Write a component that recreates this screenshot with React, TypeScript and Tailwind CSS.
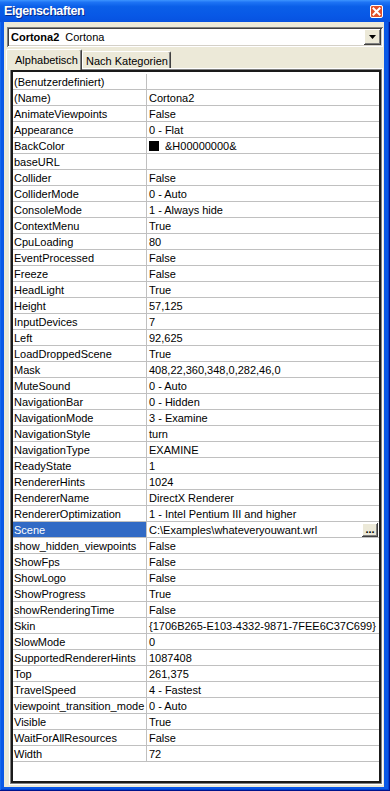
import React from "react";

const rows: [string, string][] = [
  ["(Benutzerdefiniert)", ""],
  ["(Name)", "Cortona2"],
  ["AnimateViewpoints", "False"],
  ["Appearance", "0 - Flat"],
  ["BackColor", "&H00000000&"],
  ["baseURL", ""],
  ["Collider", "False"],
  ["ColliderMode", "0 - Auto"],
  ["ConsoleMode", "1 - Always hide"],
  ["ContextMenu", "True"],
  ["CpuLoading", "80"],
  ["EventProcessed", "False"],
  ["Freeze", "False"],
  ["HeadLight", "True"],
  ["Height", "57,125"],
  ["InputDevices", "7"],
  ["Left", "92,625"],
  ["LoadDroppedScene", "True"],
  ["Mask", "408,22,360,348,0,282,46,0"],
  ["MuteSound", "0 - Auto"],
  ["NavigationBar", "0 - Hidden"],
  ["NavigationMode", "3 - Examine"],
  ["NavigationStyle", "turn"],
  ["NavigationType", "EXAMINE"],
  ["ReadyState", "1"],
  ["RendererHints", "1024"],
  ["RendererName", "DirectX Renderer"],
  ["RendererOptimization", "1 - Intel Pentium III and higher"],
  ["Scene", "C:\\Examples\\whateveryouwant.wrl"],
  ["show_hidden_viewpoints", "False"],
  ["ShowFps", "False"],
  ["ShowLogo", "False"],
  ["ShowProgress", "True"],
  ["showRenderingTime", "False"],
  ["Skin", "{1706B265-E103-4332-9871-7FEE6C37C699}"],
  ["SlowMode", "0"],
  ["SupportedRendererHints", "1087408"],
  ["Top", "261,375"],
  ["TravelSpeed", "4 - Fastest"],
  ["viewpoint_transition_mode", "0 - Auto"],
  ["Visible", "True"],
  ["WaitForAllResources", "False"],
  ["Width", "72"],
];

function Row({ name, value }: { name: string; value: string }) {
  const selected = name === "Scene";
  return (
    <div className="flex h-4 shrink-0 border-b border-[#C0C0C0]">
      <div
        className={
          selected
            ? "w-[134px] shrink-0 border-r border-[#C0C0C0] bg-[#316AC5] text-white pl-[1px] leading-[17px] whitespace-nowrap overflow-hidden"
            : "w-[134px] shrink-0 border-r border-[#C0C0C0] pl-[1px] leading-[17px] whitespace-nowrap overflow-hidden"
        }
      >
        {name}
      </div>
      <div className="flex-1 flex items-center pl-[2px] whitespace-nowrap overflow-hidden">
        {name === "BackColor" && (
          <span className="w-[10px] h-[10px] bg-black mr-[6px] mt-[1px] shrink-0" />
        )}
        <span className="flex-1 leading-[17px] h-[15px]">{value}</span>
        {selected && (
          <span className="w-[16px] h-[14px] mr-[1px] bg-[#ECE9D8] flex items-end justify-center shadow-[inset_-1px_-1px_#404040,inset_1px_1px_#FFFFFF,inset_-2px_-2px_#808080] font-bold text-[11px] leading-[11px] pb-[2px]">
            ...
          </span>
        )}
      </div>
    </div>
  );
}

export default function App() {
  return (
    <div className="w-[390px] h-[791px] flex flex-col bg-[#0A58E6] font-['Liberation_Sans',Arial,sans-serif] text-[11px] text-black overflow-hidden shadow-[inset_-1px_-1px_#00138C,inset_1px_1px_#166AEE,inset_-2px_-2px_#0040D0]">
      {/* Title bar */}
      <div className="h-[22px] shrink-0 flex items-center justify-between pl-[4px] pr-[7px] bg-[linear-gradient(180deg,#3D95FF_0%,#1E74F5_10%,#0A5FE8_30%,#0858E6_70%,#0752E0_100%)]">
        <span className="text-white font-bold text-[12.5px] tracking-[-0.4px] [text-shadow:1px_1px_#0A2A8A]">
          Eigenschaften
        </span>
        <span className="w-[13px] h-[13px] rounded-[2px] border border-white bg-[#E0502A] flex items-center justify-center">
          <svg width="9" height="9" viewBox="0 0 9 9">
            <path d="M1.5 1.5 L7.5 7.5 M7.5 1.5 L1.5 7.5" stroke="white" strokeWidth="2" strokeLinecap="square" />
          </svg>
        </span>
      </div>
      {/* Body */}
      <div className="flex-1 flex ml-[4px] mr-[6px] mb-[4px]">
        <div className="w-[380px] flex flex-col bg-[#ECE9D8] pt-[5px] pb-[2px]">
          {/* Combo */}
          <div className="h-[20px] w-[376px] ml-[3px] shrink-0 flex items-center bg-white shadow-[inset_1px_1px_#808080,inset_-1px_-1px_#FFFFFF,inset_2px_2px_#404040,inset_-2px_-2px_#D4D0C8] pl-[4px] pr-[2px]">
            <span className="font-bold">Cortona2</span>
            <span className="ml-[6px] flex-1">Cortona</span>
            <span className="w-[17px] h-[16px] bg-[#ECE9D8] flex items-center justify-center shadow-[inset_-1px_-1px_#404040,inset_1px_1px_#FFFFFF,inset_-2px_-2px_#808080]">
              <svg width="7" height="4" viewBox="0 0 7 4">
                <polygon points="0,0 7,0 3.5,4" fill="black" />
              </svg>
            </span>
          </div>
          {/* Tabs */}
          <div className="h-[19px] mt-[2px] shrink-0 flex items-end ml-[2px]">
            <div className="relative z-10 h-[21px] -mb-[2px] w-[76px] bg-[#ECE9D8] border-l border-t border-white rounded-tl-[2px] rounded-tr-[2px] shadow-[inset_-1px_0_#808080] border-r border-r-[#404040] pl-[8px] pt-[3px] leading-[14px]">
              Alphabetisch
            </div>
            <div className="h-[17px] w-[89px] bg-[#ECE9D8] border-l border-t border-white rounded-tl-[2px] rounded-tr-[2px] shadow-[inset_-1px_0_#808080] border-r border-r-[#404040] pl-[3px] pt-[2px] leading-[15px]">
              Nach Kategorien
            </div>
          </div>
          {/* Grid frame */}
          <div className="flex-1 w-[374px] ml-[5px] border border-white flex flex-col">
            <div className="flex-1 border border-[#808080] flex flex-col">
              <div className="flex-1 border-2 border-[#1A1A1A] bg-white pt-[2px] flex flex-col overflow-hidden">
                {rows.map(([n, v]) => (
                  <Row key={n} name={n} value={v} />
                ))}
              </div>
            </div>
          </div>
        </div>
      </div>
    </div>
  );
}
